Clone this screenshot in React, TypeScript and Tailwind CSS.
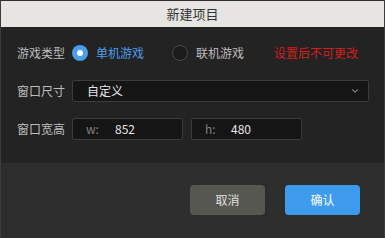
import { ChevronDown } from "lucide-react";

const font = { fontFamily: '"Noto Sans CJK SC", "Noto Sans", sans-serif' };

const Radio = ({ checked, label }: { checked: boolean; label: string }) => (
  <label className="flex items-center gap-[8px] shrink-0">
    {checked ? (
      <span className="w-[16px] h-[16px] rounded-full bg-[#4a9eea] flex items-center justify-center">
        <span className="w-[6px] h-[6px] rounded-full bg-white" />
      </span>
    ) : (
      <span className="w-[16px] h-[16px] rounded-full border border-[#4a4a4a] bg-[#1b1b1b]" />
    )}
    <span className={checked ? "text-[#4a9eea]" : "text-[#bdbdbd]"}>{label}</span>
  </label>
);

export default function App() {
  return (
    <div
      className="w-[385px] h-[238px] flex flex-col bg-[#2d2d2d] border-t border-[#2f2f2f] border-x border-x-[#3c3c3c] text-[12px] whitespace-nowrap"
      style={font}
    >
      <div className="h-[26px] shrink-0 bg-[#e6e5e1] flex items-center justify-center text-[13px] text-[#333]">
        新建项目
      </div>

      <div className="h-[136px] shrink-0 bg-[#232323] flex flex-col pl-[16px] pr-[15px] pt-[15px] gap-[16px]">
        <div className="flex items-center h-[22px]">
          <span className="w-[55px] shrink-0 text-[#bdbdbd]">游戏类型</span>
          <Radio checked label="单机游戏" />
          <span className="ml-[28px] shrink-0">
            <Radio checked={false} label="联机游戏" />
          </span>
          <span className="ml-[30px] shrink-0 text-[#d41e1e]">设置后不可更改</span>
        </div>

        <div className="flex items-center h-[22px]">
          <span className="w-[55px] shrink-0 text-[#bdbdbd]">窗口尺寸</span>
          <div className="flex-1 h-[22px] rounded-[2px] border border-[#3c3c3c] bg-[#151515] flex items-center pl-[14px] pr-[8px] text-[#e6e6e6]">
            <span className="flex-1">自定义</span>
            <ChevronDown size={10} strokeWidth={2.5} className="text-[#9a9a9a]" />
          </div>
        </div>

        <div className="flex items-center h-[22px]">
          <span className="w-[55px] shrink-0 text-[#bdbdbd]">窗口宽高</span>
          <div className="w-[111px] h-[22px] rounded-[2px] border border-[#3c3c3c] bg-[#151515] flex items-center pl-[13px]">
            <span className="w-[29px] text-[#808080]">w:</span>
            <span className="text-[#e6e6e6]">852</span>
          </div>
          <div className="ml-[8px] w-[111px] h-[22px] rounded-[2px] border border-[#3c3c3c] bg-[#151515] flex items-center pl-[13px]">
            <span className="w-[26px] text-[#808080]">h:</span>
            <span className="text-[#e6e6e6]">480</span>
          </div>
        </div>
      </div>

      <div className="flex-1 flex justify-end items-start pt-[22px] pr-[24px] gap-[20px]">
        <button className="w-[75px] h-[30px] rounded-[4px] bg-[#575752] text-[#e0e0e0]">取消</button>
        <button className="w-[75px] h-[30px] rounded-[4px] bg-[#3f9bed] text-white">确认</button>
      </div>
    </div>
  );
}
